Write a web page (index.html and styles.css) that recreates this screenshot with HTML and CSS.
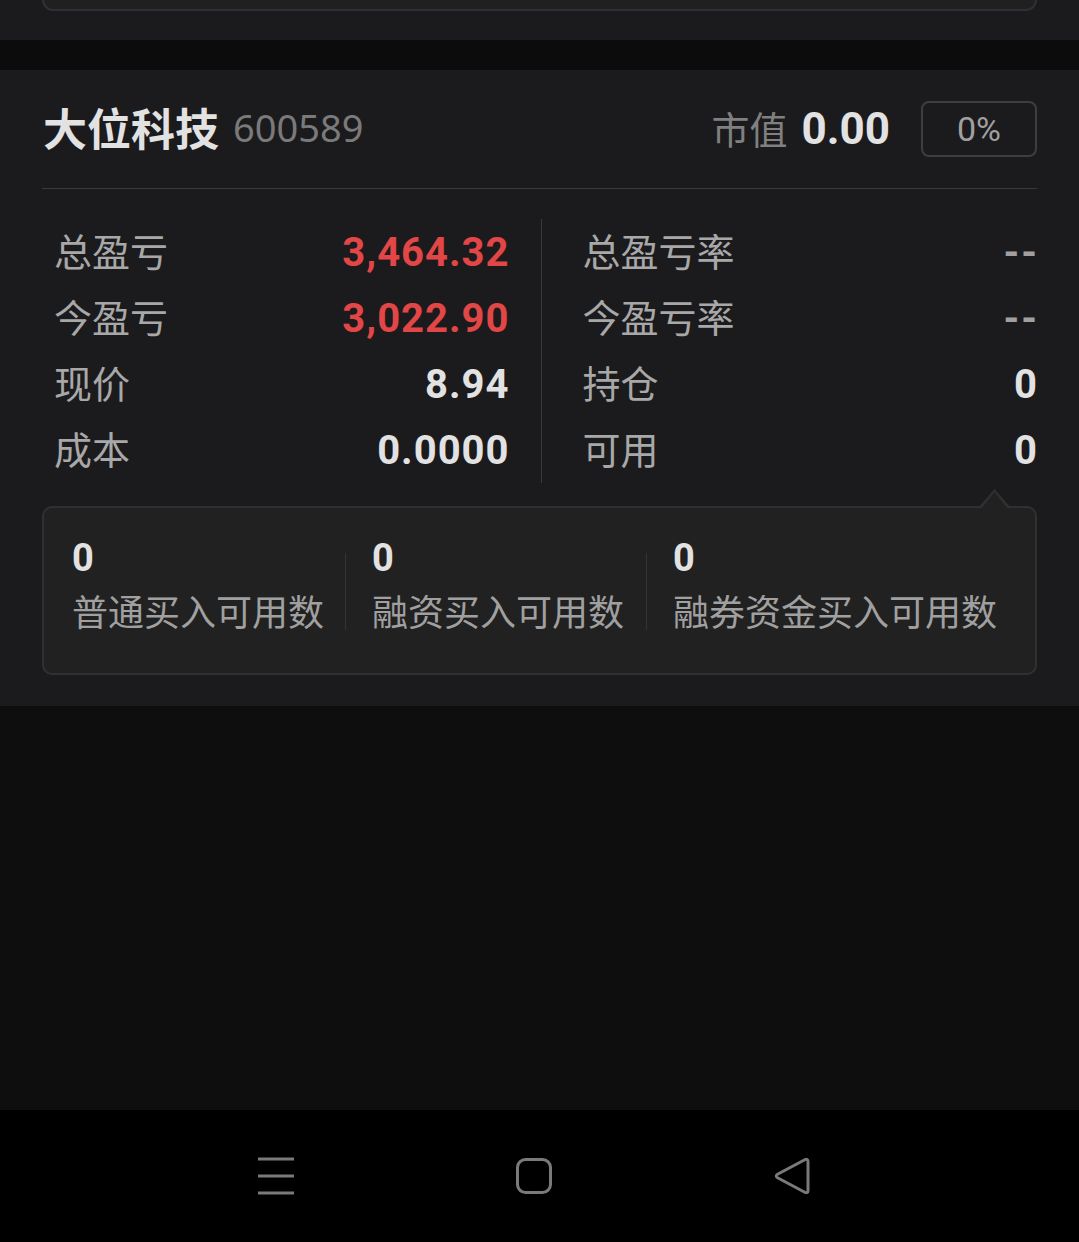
FILE: index.html
```html
<!DOCTYPE html>
<html>
  <head>
    <meta charset="utf-8">
    <title>持仓</title>
    <link rel="stylesheet" href="styles.css">
  </head>
  <body>
  <div class="prevSection">
    <div class="prevCard"></div>
  </div>
  <div class="spacer"></div>
  <div class="position">
    <div class="posHead">
      <span class="stockName">大位科技</span>
      <span class="stockCode">600589</span>
      <span class="grow"></span>
      <span class="mvLabel">市值</span>
      <span class="mvValue">0.00</span>
      <span class="ratioBox">0%</span>
    </div>
    <div class="stats">
      <div class="statCol left">
        <div class="statRow"><span class="label">总盈亏</span><span class="value red">3,464.32</span></div>
        <div class="statRow"><span class="label">今盈亏</span><span class="value red">3,022.90</span></div>
        <div class="statRow"><span class="label">现价</span><span class="value">8.94</span></div>
        <div class="statRow"><span class="label">成本</span><span class="value">0.0000</span></div>
      </div>
      <div class="statCol right">
        <div class="statRow"><span class="label">总盈亏率</span><span class="value dash">--</span></div>
        <div class="statRow"><span class="label">今盈亏率</span><span class="value dash">--</span></div>
        <div class="statRow"><span class="label">持仓</span><span class="value">0</span></div>
        <div class="statRow"><span class="label">可用</span><span class="value">0</span></div>
      </div>
    </div>
    <div class="popup">
      <div class="popItem first">
        <div class="popNum">0</div>
        <div class="popLabel">普通买入可用数</div>
      </div>
      <div class="popItem">
        <div class="popNum">0</div>
        <div class="popLabel">融资买入可用数</div>
      </div>
      <div class="popItem">
        <div class="popNum">0</div>
        <div class="popLabel">融券资金买入可用数</div>
      </div>
    </div>
  </div>
  <div class="empty"></div>
  <div class="navBar">
    <svg class="navIcon" width="40" height="40" viewBox="0 0 40 40">
      <path d="M2 3h36M2 20h36M2 37h36" stroke="#7a7a7a" stroke-width="3" fill="none"/>
    </svg>
    <svg class="navIcon" width="40" height="40" viewBox="0 0 40 40">
      <rect x="3.5" y="3.5" width="33" height="33" rx="8" stroke="#7a7a7a" stroke-width="3" fill="none"/>
    </svg>
    <svg class="navIcon" width="40" height="40" viewBox="0 0 40 40">
      <path d="M36 5.5v29c0 2-1.5 2.8-3.2 1.8L5.5 21.8c-1.6-1-1.6-2.6 0-3.6L32.8 3.7C34.5 2.7 36 3.5 36 5.5z" stroke="#7a7a7a" stroke-width="3" fill="none" stroke-linejoin="round"/>
    </svg>
  </div>
  </body>
</html>
```

FILE: styles.css
```css
body {
  margin: 0;
  width: 1079px;
  height: 1242px;
  background: rgb(14,14,14);
  font-family: "Noto Sans CJK SC", "Noto Sans", sans-serif;
  display: flex;
  flex-direction: column;
  overflow: hidden;
  }
.prevSection {
  height: 40px;
  background: rgb(27,27,29);
  padding: 0 42px;
  }
.prevCard {
  height: 9px;
  border: 2px solid rgb(48,48,50);
  border-top: none;
  border-radius: 0 0 12px 12px;
  background: rgb(32,32,33);
  }
.spacer {
  height: 30px;
  background: rgb(12,12,12);
  }
.position {
  background: rgb(27,27,29);
  padding: 0 42px 31px 42px;
  }
.posHead {
  height: 118px;
  display: flex;
  align-items: center;
  border-bottom: 1px solid rgb(58,58,60);
  }
.stockName {
  color: rgb(226,226,226);
  font-size: 44px;
  font-weight: bold;
  margin-left: 1px;
  margin-top: -4px;
  }
.stockCode {
  color: rgb(122,122,122);
  font-family: "Noto Sans", sans-serif;
  font-size: 38px;
  margin-left: 14px;
  margin-top: -4px;
  }
.grow {
  flex: 1;
  }
.mvLabel {
  color: rgb(128,128,128);
  font-size: 38px;
  margin-top: -4px;
  }
.mvValue {
  color: rgb(226,226,226);
  font-family: Roboto, sans-serif;
  font-weight: bold;
  font-size: 44px;
  margin-left: 14px;
  }
.ratioBox {
  margin-left: 31px;
  width: 112px;
  height: 52px;
  border: 2px solid rgb(62,62,64);
  border-radius: 8px;
  color: rgb(160,160,160);
  font-family: Roboto, sans-serif;
  font-size: 34px;
  display: flex;
  align-items: center;
  justify-content: center;
  }
.stats {
  display: flex;
  padding-top: 30px;
  }
.statCol {
  flex: 1;
  }
.statCol.left {
  padding: 0 32px 0 12px;
  }
.statCol.right {
  padding-left: 41px;
  border-left: 1px solid rgb(58,58,60);
  }
.statRow {
  height: 66px;
  display: flex;
  align-items: center;
  justify-content: space-between;
  }
.label {
  color: rgb(168,168,168);
  font-size: 38px;
  margin-top: -6px;
  }
.value {
  color: rgb(226,226,226);
  font-family: Roboto, sans-serif;
  font-weight: bold;
  font-size: 40px;
  letter-spacing: 1px;
  margin-right: -1px;
  }
.value.red {
  color: rgb(226,70,70);
  }
.value.dash {
  color: rgb(160,160,160);
  letter-spacing: 2px;
  margin-right: -2px;
  }
.popup {
  position: relative;
  margin-top: 23px;
  border: 2px solid rgb(48,48,50);
  border-radius: 10px;
  background: rgb(33,33,34);
  display: flex;
  align-items: flex-start;
  padding-top: 45px;
  box-sizing: border-box;
  height: 169px;
  }
.popup:before {
  content: "";
  position: absolute;
  top: -19px;
  right: 24px;
  width: 33px;
  height: 19px;
  background: rgb(48,48,50);
  clip-path: polygon(50% 0, 100% 100%, 0 100%);
  }
.popup:after {
  content: "";
  position: absolute;
  top: -16px;
  right: 27px;
  width: 27px;
  height: 17px;
  background: rgb(33,33,34);
  clip-path: polygon(50% 0, 100% 100%, 0 100%);
  }
.popItem {
  padding: 0 22px 0 26px;
  border-left: 1px solid rgb(52,52,54);
  }
.popItem.first {
  border-left: none;
  padding-left: 28px;
  padding-right: 21px;
  }
.popNum {
  color: rgb(226,226,226);
  font-family: Roboto, sans-serif;
  font-weight: bold;
  font-size: 38px;
  line-height: 40px;
  margin-top: -15px;
  }
.popLabel {
  color: rgb(160,160,160);
  font-size: 36px;
  line-height: 40px;
  margin-top: 12px;
  }
.empty {
  flex: 1;
  }
.navBar {
  height: 132px;
  background: black;
  display: flex;
  align-items: center;
  justify-content: center;
  gap: 218px;
  padding-right: 12px;
  }
```
